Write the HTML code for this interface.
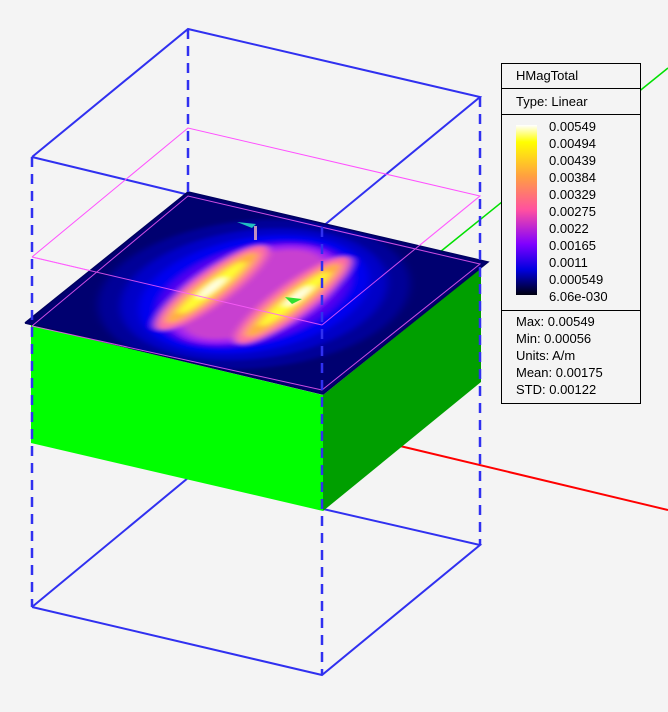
<!DOCTYPE html>
<html><head><meta charset="utf-8"><style>
body{margin:0;width:668px;height:712px;background:#f4f4f4;overflow:hidden;font-family:"Liberation Sans",sans-serif}
</style></head><body>
<svg width="668" height="712" viewBox="0 0 668 712" style="position:absolute;left:0;top:0">
<defs>
<clipPath id="pc"><rect x="0" y="0" width="100" height="100"/></clipPath>
<filter id="bl" x="-50%" y="-50%" width="200%" height="200%"><feGaussianBlur stdDeviation="1.3"/></filter>
<linearGradient id="cb" x1="0" y1="0" x2="0" y2="1">
<stop offset="0" stop-color="#ffffff"/><stop offset="0.1" stop-color="#ffff00"/><stop offset="0.3" stop-color="#ffa040"/><stop offset="0.5" stop-color="#ff50a0"/><stop offset="0.7" stop-color="#8000ff"/><stop offset="0.85" stop-color="#0000e0"/><stop offset="1" stop-color="#000010"/>
</linearGradient>
</defs>
<line x1="440" y1="252" x2="668" y2="68" stroke="#00e000" stroke-width="1.5"/>
<line x1="400" y1="446" x2="668" y2="510" stroke="#ff0000" stroke-width="2"/>
<g stroke="#3030f0" stroke-width="2" fill="none">
<polyline points="32,157 188,29 480,97 322,227 32,157"/>
<polyline points="32,607 188,478 480,545 322,675 32,607"/>
</g>
<g stroke="#ff50ff" stroke-width="1" fill="none">
<polyline points="32,257 188,128 480,196 322,325 32,257"/>
</g>
<polygon points="31,325 323,395 323,511 31,443" fill="#00ff00"/>
<polygon points="323,395 481,268 481,382 323,511" fill="#009f00"/>
<polygon points="25,323 188,192 488,262 323,394" fill="#000070"/>
<g transform="matrix(1.63,-1.31,2.98,0.71,25,323)" clip-path="url(#pc)">
<g filter="url(#bl)">
<ellipse cx="49" cy="50" rx="52" ry="44" fill="#000098"/>
<ellipse cx="49" cy="50" rx="46" ry="37" fill="#0000c8"/>
<ellipse cx="49" cy="50" rx="42" ry="31" fill="#0000f0"/>
<ellipse cx="49" cy="50" rx="38" ry="25" fill="#5000f0"/>
<ellipse cx="49" cy="50" rx="36" ry="21" fill="#a020f0"/>
<ellipse cx="49" cy="50" rx="33" ry="17" fill="#c840d0"/>
<ellipse cx="47" cy="37" rx="32" ry="7" fill="#ff70a0"/>
<ellipse cx="51" cy="62" rx="33" ry="7" fill="#ff70a0"/>
<ellipse cx="47" cy="37" rx="27" ry="4.5" fill="#ffb040"/>
<ellipse cx="51" cy="62" rx="28" ry="4.5" fill="#ffb040"/>
<ellipse cx="47" cy="37" rx="20" ry="2.6" fill="#ffff30"/>
<ellipse cx="52" cy="62" rx="21" ry="2.6" fill="#ffff30"/>
<ellipse cx="47" cy="37" rx="8" ry="1.3" fill="#ffffff"/>
<ellipse cx="54" cy="62" rx="8" ry="1.3" fill="#ffffff"/>
</g>
</g>
<polyline points="25,323 188,192 488,262 323,394 25,323" fill="none" stroke="#000060" stroke-width="1.5"/>
<g stroke="#ff60ff" stroke-width="1" fill="none" opacity="0.8">
<polyline points="32,326 188,196 480,264 322,390 32,326"/>
<line x1="32" y1="257" x2="322" y2="325"/>
<line x1="322" y1="325" x2="480" y2="196"/>
</g>
<polygon points="237,222 256,224 252,228" fill="#20c0c0"/>
<rect x="254" y="226" width="3" height="14" fill="#c090c0"/>
<polygon points="285,297 302,299 292,304" fill="#30e030"/>
<g stroke="#3030f0" stroke-width="2.5" stroke-dasharray="10,7">
<line x1="32" y1="157" x2="32" y2="607"/>
<line x1="322" y1="227" x2="322" y2="675"/>
<line x1="480" y1="97" x2="480" y2="545"/>
<line x1="188" y1="29" x2="188" y2="195"/>
</g>
<rect x="501.5" y="63.5" width="139" height="340" fill="#f4f4f4" stroke="#000" stroke-width="1"/>
<line x1="501" y1="88.5" x2="641" y2="88.5" stroke="#000"/>
<line x1="501" y1="114.5" x2="641" y2="114.5" stroke="#000"/>
<line x1="501" y1="310.5" x2="641" y2="310.5" stroke="#000"/>
<rect x="516" y="125" width="21" height="170" fill="url(#cb)"/>
<g font-size="13" fill="#000" font-family="Liberation Sans, sans-serif">
<text x="516" y="80">HMagTotal</text>
<text x="516" y="106">Type: Linear</text>
<text x="549" y="131">0.00549</text>
<text x="549" y="148">0.00494</text>
<text x="549" y="165">0.00439</text>
<text x="549" y="182">0.00384</text>
<text x="549" y="199">0.00329</text>
<text x="549" y="216">0.00275</text>
<text x="549" y="233">0.0022</text>
<text x="549" y="250">0.00165</text>
<text x="549" y="267">0.0011</text>
<text x="549" y="284">0.000549</text>
<text x="549" y="301">6.06e-030</text>
<text x="516" y="326">Max: 0.00549</text>
<text x="516" y="343">Min: 0.00056</text>
<text x="516" y="360">Units: A/m</text>
<text x="516" y="377">Mean: 0.00175</text>
<text x="516" y="394">STD: 0.00122</text>
</g>
</svg>
</body></html>
